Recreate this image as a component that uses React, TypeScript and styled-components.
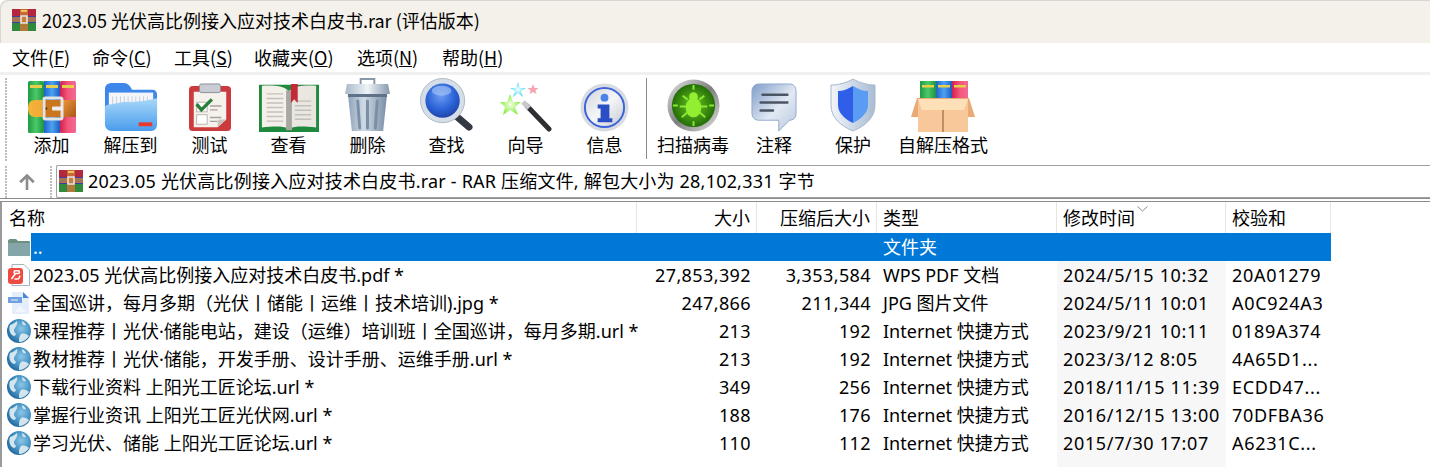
import React from "react";
import styled, { createGlobalStyle } from "styled-components";

const FONT = `"Noto Sans CJK SC", "Noto Sans", sans-serif`;
const LIST_FONT = `"Noto Sans", "Noto Sans CJK SC", sans-serif`;
const COLS = "632px 120px 120px 180px 169px 105px";

const GlobalStyle = createGlobalStyle`
  html, body { margin: 0; padding: 0; background: #fff; overflow: hidden; }
  body { font-family: ${FONT}; color: #000; }
`;

interface RowType {
  icon: "folder" | "pdf" | "jpg" | "url";
  name: string;
  size?: string;
  packed?: string;
  kind: string;
  modified?: string;
  crc?: string;
  selected?: boolean;
}

const rows: RowType[] = [
  { icon: "folder", name: "..", kind: "文件夹", selected: true },
  { icon: "pdf", name: "2023.05 光伏高比例接入应对技术白皮书.pdf *", size: "27,853,392", packed: "3,353,584", kind: "WPS PDF 文档", modified: "2024/5/15 10:32", crc: "20A01279" },
  { icon: "jpg", name: "全国巡讲，每月多期（光伏丨储能丨运维丨技术培训).jpg *", size: "247,866", packed: "211,344", kind: "JPG 图片文件", modified: "2024/5/11 10:01", crc: "A0C924A3" },
  { icon: "url", name: "课程推荐丨光伏·储能电站，建设（运维）培训班丨全国巡讲，每月多期.url *", size: "213", packed: "192", kind: "Internet 快捷方式", modified: "2023/9/21 10:11", crc: "0189A374" },
  { icon: "url", name: "教材推荐丨光伏·储能，开发手册、设计手册、运维手册.url *", size: "213", packed: "192", kind: "Internet 快捷方式", modified: "2023/3/12 8:05", crc: "4A65D1..." },
  { icon: "url", name: "下载行业资料 上阳光工匠论坛.url *", size: "349", packed: "256", kind: "Internet 快捷方式", modified: "2018/11/15 11:39", crc: "ECDD47..." },
  { icon: "url", name: "掌握行业资讯 上阳光工匠光伏网.url *", size: "188", packed: "176", kind: "Internet 快捷方式", modified: "2016/12/15 13:00", crc: "70DFBA36" },
  { icon: "url", name: "学习光伏、储能 上阳光工匠论坛.url *", size: "110", packed: "112", kind: "Internet 快捷方式", modified: "2015/7/30 17:07", crc: "A6231C..." },
];

const RarSmall = () => (
  <svg width="24" height="22" viewBox="0 0 24 22">
    <rect x="0" y="0" width="24" height="7" fill="#b5263f" />
    <rect x="0" y="7" width="24" height="7" fill="#3d3f9c" />
    <rect x="0" y="14" width="24" height="8" fill="#2f8a3c" />
    <rect x="8" y="0" width="8" height="22" fill="#c8763a" opacity="0.85" />
    <rect x="0" y="8" width="24" height="5" fill="#c9873a" opacity="0.75" />
    <rect x="9" y="7" width="6" height="7" fill="none" stroke="#eee" strokeWidth="1.4" />
    <rect x="9" y="1" width="6" height="2" fill="#e7c65a" />
  </svg>
);

const AddIcon = () => (
  <svg width="48" height="52" viewBox="0 0 48 52">
    <defs>
      <linearGradient id="bookG" x1="0" x2="1" y1="0" y2="0"><stop offset="0" stopColor="#1f9a44" /><stop offset="0.5" stopColor="#4cc968" /><stop offset="1" stopColor="#1b9440" /></linearGradient>
      <linearGradient id="bookB" x1="0" x2="1" y1="0" y2="0"><stop offset="0" stopColor="#1e63c8" /><stop offset="0.5" stopColor="#4ea2f2" /><stop offset="1" stopColor="#1c5dc0" /></linearGradient>
      <linearGradient id="bookR" x1="0" x2="1" y1="0" y2="0"><stop offset="0" stopColor="#d21f50" /><stop offset="0.5" stopColor="#f4577c" /><stop offset="1" stopColor="#f06a94" /></linearGradient>
      <linearGradient id="beltL" x1="0" x2="1" y1="0" y2="0"><stop offset="0" stopColor="#f4b43a" /><stop offset="1" stopColor="#e8952a" /></linearGradient>
      <linearGradient id="beltR" x1="0" x2="1" y1="0" y2="1"><stop offset="0" stopColor="#ee9a38" /><stop offset="1" stopColor="#a9561a" /></linearGradient>
    </defs>
    <rect x="0" y="0" width="16" height="52" rx="1.5" fill="url(#bookG)" />
    <rect x="16" y="0" width="16" height="52" fill="url(#bookB)" />
    <rect x="32" y="0" width="16" height="52" rx="1.5" fill="url(#bookR)" />
    <rect x="2" y="4" width="12" height="3" fill="#e7cf4a" />
    <rect x="18" y="4" width="12" height="3" fill="#e7cf4a" />
    <rect x="34" y="4" width="12" height="3" fill="#e7cf4a" />
    <path d="M7 19H48V36H7C2 36 0 32 0 27.5S2 19 7 19Z" fill="url(#beltL)" />
    <rect x="34" y="19" width="14" height="17" fill="url(#beltR)" />
    <rect x="14" y="19" width="20" height="17" fill="#c9761f" />
    <circle cx="18" cy="27.5" r="1.3" fill="#5a3008" />
    <rect x="16" y="17" width="18" height="21" rx="1.5" fill="none" stroke="#e4e4e4" strokeWidth="3" />
    <rect x="24" y="25.5" width="11" height="4" rx="1" fill="#eee" />
  </svg>
);

const ExtractIcon = () => (
  <svg width="54" height="50" viewBox="0 0 56 52" preserveAspectRatio="none">
    <defs>
      <linearGradient id="fold" x1="0" x2="0" y1="0" y2="1"><stop offset="0" stopColor="#a8d8fa" /><stop offset="1" stopColor="#4a9cec" /></linearGradient>
    </defs>
    <path d="M1 8C1 3 4 1 9 1H20C24 1 26 3 28 6L29 8H50C53 8 55 10 55 13V40H1Z" fill="#3d86ea" />
    <rect x="5" y="11" width="46" height="24" fill="#f4f5f8" />
    <path d="M9 15V24M13 15V24M17 15V24M21 15V24M25 15V24M29 15V24M33 15V24M37 15V24M41 15V24M45 15V24" stroke="#c5ccd8" strokeWidth="1" />
    <path d="M3 24C14 22 20 20 28 21C40 20 48 19 54 17C55 17 55 18 55 19V44C55 48 53 51 49 51H8C4 51 1 48 1 44V27C1 25 2 24 3 24Z" fill="url(#fold)" />
    <rect x="36" y="42" width="14" height="4" fill="#e8392c" />
  </svg>
);

const TestIcon = () => (
  <svg width="42" height="48" viewBox="0 0 44 50" preserveAspectRatio="none">
    <rect x="0" y="3" width="44" height="47" rx="4" fill="#cc3a3e" />
    <path d="M5 9H39V38L30 46H5Z" fill="#f5f2ee" />
    <path d="M30 46L39 38H31C30 41 30 43 30 46Z" fill="#c9c3bd" />
    <rect x="11" y="1" width="22" height="9" rx="2" fill="#c9ccd2" stroke="#8a8d94" strokeWidth="1" />
    <rect x="8" y="20" width="11" height="10" fill="#fff" stroke="#b9b3ad" />
    <rect x="8" y="33" width="11" height="10" fill="#fff" stroke="#b9b3ad" />
    <path d="M8 22L13 28L24 17" fill="none" stroke="#2b7d3b" strokeWidth="3.5" />
    <path d="M22 24H34M22 28H30M22 36H34M22 40H30" stroke="#a9a19b" strokeWidth="1.5" />
  </svg>
);

const ViewIcon = () => (
  <svg width="60" height="49" viewBox="0 0 62 54" preserveAspectRatio="none">
    <path d="M0 2H62V54H0Z" fill="#1f8a3e" />
    <path d="M3 3C14 2 25 3 30 8V50C24 47 14 48 3 49Z" fill="#f2f0e8" />
    <path d="M59 3C48 2 37 3 32 8V50C38 47 48 48 59 49Z" fill="#e9e7df" />
    <rect x="28" y="8" width="6" height="44" fill="#a8a8a2" />
    <path d="M8 12H25M8 17H25M8 22H25M8 27H25M8 32H25M8 37H25M8 42H25M37 20H54M37 25H54M37 30H54M37 35H54M37 40H54" stroke="#c2c0b8" strokeWidth="1.6" />
    <path d="M33 1H40V22L36.5 18L33 22Z" fill="#c22a38" />
  </svg>
);

const TrashIcon = () => (
  <svg width="45" height="54" viewBox="0 0 46 54" preserveAspectRatio="none">
    <defs>
      <linearGradient id="can" x1="0" x2="1" y1="0" y2="0"><stop offset="0" stopColor="#8ea2b8" /><stop offset="0.4" stopColor="#cfdae6" /><stop offset="1" stopColor="#7a8ea6" /></linearGradient>
      <linearGradient id="lid" x1="0" x2="1" y1="0" y2="0"><stop offset="0" stopColor="#a9b8c8" /><stop offset="0.5" stopColor="#eef3f7" /><stop offset="1" stopColor="#8598ad" /></linearGradient>
    </defs>
    <path d="M16 6V1H30V6" fill="none" stroke="#8a98a8" strokeWidth="2" />
    <path d="M0 16L2 6H44L46 16Z" fill="url(#lid)" />
    <path d="M3 16H43L39 53H7Z" fill="url(#can)" />
    <path d="M3 16H43V19H3Z" fill="#5f7289" />
    <path d="M13 23L15 50M23 23V50M33 23L31 50" stroke="#7a8ea6" strokeWidth="3" strokeLinecap="round" />
  </svg>
);

const FindIcon = () => (
  <svg width="53" height="53" viewBox="0 0 54 54">
    <defs>
      <radialGradient id="lens" cx="0.45" cy="0.35" r="0.7"><stop offset="0" stopColor="#6f9cf4" /><stop offset="0.6" stopColor="#2a62d6" /><stop offset="1" stopColor="#1d3fa0" /></radialGradient>
    </defs>
    <path d="M36 38L50 50" stroke="#333a44" strokeWidth="7" strokeLinecap="round" />
    <circle cx="23" cy="23" r="22.5" fill="#d5dde6" stroke="#aebac6" strokeWidth="1" />
    <circle cx="23" cy="23" r="17.5" fill="url(#lens)" />
    <ellipse cx="22" cy="13" rx="10" ry="5" fill="#a5c4f8" opacity="0.65" />
  </svg>
);

const WizardIcon = () => (
  <svg width="54" height="50" viewBox="0 0 54 50">
    <defs>
      <radialGradient id="starG"><stop offset="0" stopColor="#f4ffe8" /><stop offset="1" stopColor="#86ec3c" /></radialGradient>
      <radialGradient id="starC"><stop offset="0" stopColor="#f2ffff" /><stop offset="1" stopColor="#52d8f0" /></radialGradient>
    </defs>
    <path d="M10 12L13 20L21 20L15 25L18 33L10 28L3 33L5 25L0 20L7 20Z" fill="url(#starG)" transform="translate(1 0)" />
    <path d="M18 0L20 6L26 6L21 9L23 15L18 11L13 15L15 9L10 6L16 6Z" fill="url(#starC)" transform="translate(1 0)" />
    <path d="M34 2L35.5 6L39.5 6L36.5 8.5L37.5 12L34 10L30.5 12L31.5 8.5L28.5 6L32.5 6Z" fill="#f6a6b0" />
    <path d="M28 24L50 47" stroke="#2f2f33" strokeWidth="5" strokeLinecap="round" />
    <path d="M24 20L30 26" stroke="#c8c8cc" strokeWidth="5" />
  </svg>
);

const InfoIcon = () => (
  <svg width="49" height="49" viewBox="0 0 50 50">
    <defs>
      <linearGradient id="infoB" x1="0" x2="1" y1="0" y2="1"><stop offset="0" stopColor="#cfd3da" /><stop offset="0.5" stopColor="#f5f6f8" /><stop offset="1" stopColor="#c2c7cf" /></linearGradient>
    </defs>
    <circle cx="25" cy="25" r="24.5" fill="#d8dce2" />
    <circle cx="25" cy="25" r="20" fill="url(#infoB)" stroke="#3d63d8" strokeWidth="2" />
    <circle cx="25" cy="15" r="4" fill="#4a82e8" />
    <path d="M18 22H30V36H33V40H18V36H21V26H18Z" fill="#2a4fc4" />
  </svg>
);

const ScanIcon = () => (
  <svg width="53" height="53" viewBox="0 0 54 54">
    <defs>
      <radialGradient id="scanG" cx="0.5" cy="0.5" r="0.55"><stop offset="0" stopColor="#68c81e" /><stop offset="1" stopColor="#1d6406" /></radialGradient>
      <linearGradient id="scanR" x1="0" x2="1" y1="0" y2="1"><stop offset="0" stopColor="#e8e8e8" /><stop offset="0.5" stopColor="#7e7e7e" /><stop offset="1" stopColor="#e2e2e2" /></linearGradient>
    </defs>
    <circle cx="27" cy="27" r="26.5" fill="url(#scanR)" />
    <circle cx="27" cy="27" r="22" fill="url(#scanG)" />
    <g stroke="#8ce832" strokeWidth="2" fill="none">
      <path d="M27 6V11M27 43V48M6 27H11M43 27H48" />
      <path d="M16 17L21 21M38 17L33 21M13 28H20M41 28H34M15 39L21 34M39 39L33 34" />
    </g>
    <ellipse cx="27" cy="29" rx="8" ry="10" fill="#92ee30" />
    <circle cx="27" cy="18" r="4.5" fill="#92ee30" />
  </svg>
);

const CommentIcon = () => (
  <svg width="46" height="49" viewBox="0 0 48 50" preserveAspectRatio="none">
    <defs>
      <linearGradient id="cmt" x1="0" x2="1" y1="0" y2="1"><stop offset="0" stopColor="#7f9cc8" /><stop offset="0.55" stopColor="#e2e9f3" /><stop offset="1" stopColor="#b7c7de" /></linearGradient>
    </defs>
    <path d="M8 1H40C45 1 47 4 47 9V31C47 36 44 38 40 38L29 49V38H8C4 38 1 35 1 31V9C1 4 4 1 8 1Z" fill="url(#cmt)" stroke="#8fa8cc" />
    <path d="M12 12H38M10 20H38M10 28H23" stroke="#4b5566" strokeWidth="2.6" strokeLinecap="round" />
  </svg>
);

const ShieldIcon = () => (
  <svg width="46" height="54" viewBox="0 0 46 54">
    <defs>
      <linearGradient id="shO" x1="0" x2="1" y1="0" y2="0"><stop offset="0" stopColor="#f2f5f9" /><stop offset="1" stopColor="#a9bcd4" /></linearGradient>
      <linearGradient id="shI" x1="0" x2="1" y1="0" y2="0"><stop offset="0" stopColor="#2f5fe8" /><stop offset="0.5" stopColor="#2f5fe8" /><stop offset="0.5" stopColor="#5a9cf4" /><stop offset="1" stopColor="#5a9cf4" /></linearGradient>
    </defs>
    <path d="M23 1C30 5 38 7 45 7V27C45 40 35 48 23 53C11 48 1 40 1 27V7C8 7 16 5 23 1Z" fill="url(#shO)" stroke="#a8b8cc" />
    <path d="M23 8C28 11 33 13 38 13V27C38 35 31 41 23 45C15 41 8 35 8 27V13C13 13 18 11 23 8Z" fill="url(#shI)" />
  </svg>
);

const SfxIcon = () => (
  <svg width="64" height="51" viewBox="0 0 64 51">
    <rect x="9" y="0" width="16" height="26" fill="url(#bookG)" />
    <rect x="25" y="0" width="16" height="26" fill="url(#bookB)" />
    <rect x="41" y="0" width="16" height="26" fill="url(#bookR)" />
    <rect x="11" y="4" width="12" height="2.5" fill="#e7cf4a" />
    <rect x="27" y="4" width="12" height="2.5" fill="#e7cf4a" />
    <rect x="43" y="4" width="12" height="2.5" fill="#e7cf4a" />
    <path d="M6 17H58L64 36H0Z" fill="#e8ab78" />
    <rect x="7" y="18" width="50" height="33" fill="#f8c79a" />
    <path d="M7 18H57L53 29H11Z" fill="#fde0b8" />
    <rect x="31" y="29" width="2" height="22" fill="#c48c62" />
  </svg>
);

const FolderRow = () => (
  <svg width="22" height="17" viewBox="0 0 22 17">
    <path d="M0 2C0 1 1 0 2 0H8L10 2H21C22 2 22 3 22 4V17H0Z" fill="#6f9080" />
    <rect x="0" y="4" width="22" height="13" fill="#84a6a8" />
  </svg>
);

const PdfRow = () => (
  <svg width="22" height="22" viewBox="0 0 22 22">
    <path d="M4 .5H16L21.5 6V21.5H4Z" fill="#fff" stroke="#a9b2be" />
    <rect x="0" y="4" width="15" height="16" rx="3" fill="#ee4a42" />
    <path d="M3.5 15L7.5 9.5H10C12 9.5 12 6.8 10 6.8H7.5C5.5 6.8 5.5 9.5 7.5 9.5M11.5 11.5C12 13 11 15 9 15H6.5" fill="none" stroke="#fff" strokeWidth="1.5" />
  </svg>
);

const JpgRow = () => (
  <svg width="22" height="22" viewBox="0 0 22 22">
    <path d="M4 0H15L21 6V22H4Z" fill="#e4eefa" />
    <path d="M15 0L21 6H15Z" fill="#4a86d8" />
    <rect x="0" y="5" width="14" height="6" fill="#6fa0e2" />
    <path d="M3 8H10" stroke="#d7e5f7" strokeWidth="1.2" />
    <path d="M7 20L12 14L18 20Z" fill="#f3f7fc" />
  </svg>
);

const GlobeRow = () => (
  <svg width="24" height="24" viewBox="0 0 24 24">
    <defs>
      <radialGradient id="globe" cx="0.6" cy="0.4" r="0.7"><stop offset="0" stopColor="#8cc6e6" /><stop offset="0.6" stopColor="#3f8ec2" /><stop offset="1" stopColor="#1c5c8e" /></radialGradient>
    </defs>
    <circle cx="12" cy="12" r="12" fill="url(#globe)" />
    <path d="M3 6C6 5 8 4 10 2C11 5 9 7 8 9C6 11 7 13 9 15C8 18 6 17 4 15C2 12 2 9 3 6ZM14 15C17 14 20 15 22 17C19 21 16 23 12 23C12 20 12 17 14 15ZM15 2C17 3 18 4 19 6C17 7 15 6 15 2Z" fill="#e4edf2" opacity="0.9" />
  </svg>
);

const rowIcons = { folder: FolderRow, pdf: PdfRow, jpg: JpgRow, url: GlobeRow };

const tools = [
  { label: "添加", Icon: AddIcon, width: 79, down: 3 },
  { label: "解压到", Icon: ExtractIcon, width: 79, down: 4 },
  { label: "测试", Icon: TestIcon, width: 79, down: 5 },
  { label: "查看", Icon: ViewIcon, width: 79, down: 5 },
  { label: "删除", Icon: TrashIcon, width: 79, down: 0 },
  { label: "查找", Icon: FindIcon, width: 79, down: 0 },
  { label: "向导", Icon: WizardIcon, width: 79, down: 4 },
  { label: "信息", Icon: InfoIcon, width: 79, down: 5 },
];

const tools2 = [
  { label: "扫描病毒", Icon: ScanIcon, width: 92, down: 1 },
  { label: "注释", Icon: CommentIcon, width: 70, down: 5 },
  { label: "保护", Icon: ShieldIcon, width: 88, down: 0 },
  { label: "自解压格式", Icon: SfxIcon, width: 92, down: 3 },
];

const menus = [
  { text: "文件", key: "F", wide: 80 },
  { text: "命令", key: "C", wide: 82 },
  { text: "工具", key: "S", wide: 80 },
  { text: "收藏夹", key: "O", wide: 103 },
  { text: "选项", key: "N", wide: 85 },
  { text: "帮助", key: "H", wide: 70 },
];

const App = () => (
  <Wrapper>
    <GlobalStyle />
    <TitleBar>
      <RarSmall />
      <TitleText>2023.05 光伏高比例接入应对技术白皮书.rar (评估版本)</TitleText>
    </TitleBar>
    <MenuBar>
      {menus.map((m) => (
        <MenuItem key={m.key} $wide={m.wide}>
          {m.text}(<u>{m.key}</u>)
        </MenuItem>
      ))}
    </MenuBar>
    <ToolBar>
      <Grip />
      {tools.map(({ label, Icon, width, down }) => (
        <ToolButton key={label} $wide={width}>
          <IconSlot $down={down}><Icon /></IconSlot>
          <ToolLabel>{label}</ToolLabel>
        </ToolButton>
      ))}
      <ToolDivider />
      {tools2.map(({ label, Icon, width, down }) => (
        <ToolButton key={label} $wide={width}>
          <IconSlot $down={down}><Icon /></IconSlot>
          <ToolLabel>{label}</ToolLabel>
        </ToolButton>
      ))}
    </ToolBar>
    <AddressRow>
      <Grip $short />
      <UpArrow>
        <svg width="16" height="16" viewBox="0 0 16 16">
          <path d="M8 1.5V16M1.2 8.2L8 1.5L14.8 8.2" fill="none" stroke="#8c8c8c" strokeWidth="2.6" />
        </svg>
      </UpArrow>
      <Grip $short />
      <AddressBox>
        <RarSmall />
        <AddressText>2023.05 光伏高比例接入应对技术白皮书.rar - RAR 压缩文件, 解包大小为 28,102,331 字节</AddressText>
      </AddressBox>
    </AddressRow>
    <ListFrame>
      <ListHeader>
        <HeadCell>名称</HeadCell>
        <HeadCell $right>大小</HeadCell>
        <HeadCell $right>压缩后大小</HeadCell>
        <HeadCell>类型</HeadCell>
        <HeadCell>
          修改时间
          <SortMark>
            <svg width="11" height="6" viewBox="0 0 11 6">
              <path d="M0.5 0.5L5.5 5L10.5 0.5" fill="none" stroke="#8a8a8a" />
            </svg>
          </SortMark>
        </HeadCell>
        <HeadCell>校验和</HeadCell>
      </ListHeader>
      <ListBody>
        <SortBand />
        {rows.map((row) => {
          const RowIcon = rowIcons[row.icon];
          return (
            <ListRow key={row.name} $selected={row.selected}>
              <NameCell>
                <RowIconSlot><RowIcon /></RowIconSlot>
                <NameText>{row.name}</NameText>
              </NameCell>
              <Cell $right $spacing={0.4}>{row.size}</Cell>
              <Cell $right $spacing={0.4}>{row.packed}</Cell>
              <Cell>{row.kind}</Cell>
              <Cell $spacing={0.65}>{row.modified}</Cell>
              <Cell $spacing={0.7}>{row.crc}</Cell>
            </ListRow>
          );
        })}
      </ListBody>
    </ListFrame>
  </Wrapper>
);

export default App;

const Wrapper = styled.div`
  width: 1430px;
  height: 467px;
  overflow: hidden;
  display: flex;
  flex-direction: column;
  background: #fff;
  font-size: 18px;
`;

const TitleBar = styled.div`
  height: 43px;
  flex: none;
  display: flex;
  align-items: center;
  gap: 6px;
  padding: 0 0 4px 12px;
  box-sizing: border-box;
  background: #f4f1ea;
  border-top-left-radius: 8px;
  box-shadow: inset 1px 1px 0 #d8d6d0;
`;

const TitleText = styled.span`
  font-size: 18px;
  line-height: 1;
`;

const MenuBar = styled.div`
  height: 27px;
  flex: none;
  display: flex;
  align-items: center;
  padding: 0 0 2px 12px;
  border-bottom: 3px solid #f0f0f0;
`;

const MenuItem = styled.span<{ $wide: number }>`
  width: ${(props) => props.$wide}px;
  font-size: 18px;
  line-height: 24px;
  white-space: nowrap;
`;

const ToolBar = styled.div`
  height: 90px;
  flex: none;
  display: flex;
  align-items: flex-start;
  padding: 3px 0 0 5px;
  box-sizing: border-box;
`;

const Grip = styled.div<{ $short?: boolean }>`
  width: 2px;
  height: ${(props) => (props.$short ? 32 : 84)}px;
  flex: none;
  margin-right: ${(props) => (props.$short ? 4 : 5)}px;
  background-image: linear-gradient(#bdbdbd 66%, transparent 66%);
  background-size: 2px 3px;
`;

const ToolButton = styled.div<{ $wide: number }>`
  width: ${(props) => props.$wide}px;
  flex: none;
  display: flex;
  flex-direction: column;
  align-items: center;
`;

const IconSlot = styled.div<{ $down: number }>`
  height: 54px;
  display: flex;
  align-items: flex-start;
  justify-content: center;
  padding-top: ${(props) => props.$down}px;
  box-sizing: border-box;
  svg { display: block; }
`;

const ToolLabel = styled.span`
  font-size: 18px;
  line-height: 24px;
  white-space: nowrap;
`;

const ToolDivider = styled.div`
  width: 1px;
  height: 81px;
  flex: none;
  margin: 0 0 0 2px;
  background: #8c8c8c;
`;

const AddressRow = styled.div`
  height: 33px;
  flex: none;
  display: flex;
  align-items: center;
  padding-left: 5px;
  border-bottom: 1px solid #8c8c8c;
`;

const UpArrow = styled.div`
  width: 39px;
  flex: none;
  display: flex;
  justify-content: center;
  padding-right: 7px;
  box-sizing: border-box;
  svg { display: block; }
`;

const AddressBox = styled.div`
  flex: 1;
  height: 33px;
  display: flex;
  align-items: center;
  gap: 5px;
  padding: 0 0 2px 2px;
  box-sizing: border-box;
  border: 1px solid #a0a0a0;
  border-right: none;
  border-radius: 2px 0 0 2px;
`;

const AddressText = styled.span`
  font-family: ${LIST_FONT};
  font-size: 18px;
  line-height: 1;
  letter-spacing: 0.2px;
  white-space: nowrap;
`;

const ListFrame = styled.div`
  flex: 1;
  min-height: 0;
  margin-top: 2px;
  padding-left: 5px;
  border-top: 1px solid #8c8c8c;
  box-shadow: inset 2px 0 0 #9a9a9a;
  display: flex;
  flex-direction: column;
`;

const ListHeader = styled.div`
  height: 31px;
  flex: none;
  display: grid;
  grid-template-columns: ${COLS};
  width: 1326px;
`;

const HeadCell = styled.div<{ $right?: boolean }>`
  position: relative;
  display: flex;
  align-items: center;
  justify-content: ${(props) => (props.$right ? "flex-end" : "flex-start")};
  padding: 0 6px 2px;
  font-size: 18px;
  white-space: nowrap;
  border-right: 1px solid #e6e6e6;

  &:first-child {
    padding-left: 4px;
  }
`;

const SortMark = styled.span`
  position: absolute;
  top: 2px;
  left: 80px;
  line-height: 0;
`;

const ListBody = styled.div`
  position: relative;
  flex: 1;
  min-height: 0;
`;

const SortBand = styled.div`
  position: absolute;
  left: 1052px;
  top: 28px;
  bottom: 0;
  width: 169px;
  background: #f7f7f7;
`;

const ListRow = styled.div<{ $selected?: boolean }>`
  position: relative;
  height: 28px;
  width: 1326px;
  display: grid;
  grid-template-columns: ${COLS};
  font-family: ${LIST_FONT};
  color: ${(props) => (props.$selected ? "#fff" : "#000")};
  background: ${(props) =>
    props.$selected
      ? "linear-gradient(90deg, transparent 26px, #0078d7 26px)"
      : "transparent"};
`;

const Cell = styled.div<{ $right?: boolean; $spacing?: number }>`
  display: flex;
  align-items: center;
  justify-content: ${(props) => (props.$right ? "flex-end" : "flex-start")};
  padding: 0 6px;
  font-size: 18px;
  line-height: 24px;
  letter-spacing: ${(props) => props.$spacing ?? 0}px;
  white-space: nowrap;
  overflow: hidden;
`;

const NameCell = styled.div`
  display: flex;
  align-items: center;
  min-width: 0;
`;

const RowIconSlot = styled.span`
  width: 28px;
  flex: none;
  display: flex;
  align-items: center;
  justify-content: center;
  svg { display: block; }
`;

const NameText = styled.span`
  font-size: 18px;
  line-height: 24px;
  white-space: nowrap;
`;
